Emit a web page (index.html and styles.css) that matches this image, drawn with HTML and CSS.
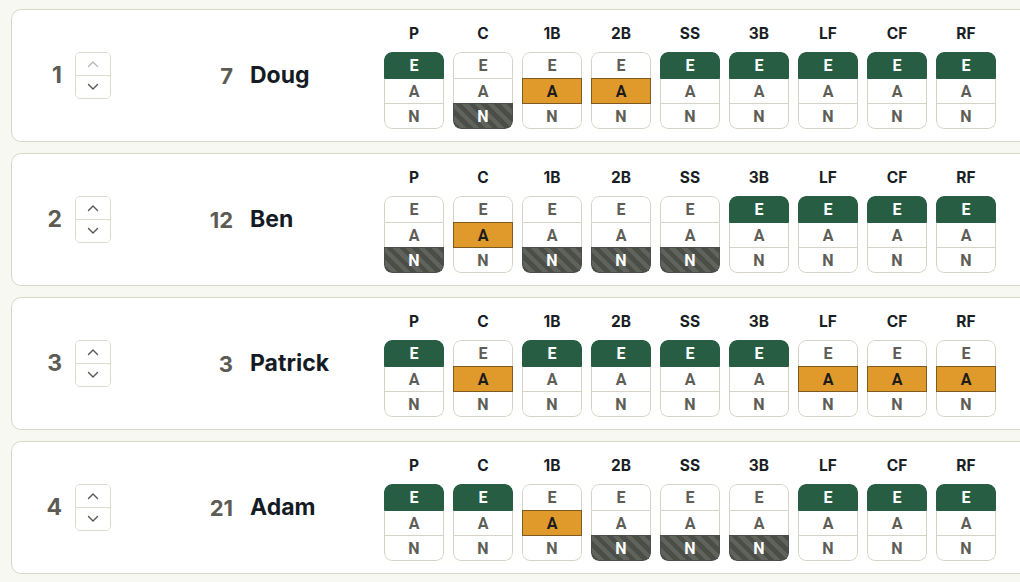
FILE: index.html
```html
<!DOCTYPE html>
<html lang="en">
<head>
<meta charset="utf-8">
<title>Lineup</title>
<link rel="stylesheet" href="styles.css">
</head>
<body>
<div class="list">

  <div class="card">
    <div class="rank">1</div>
    <div class="stepper">
      <button class="step disabled"><svg viewBox="0 0 12 8" width="12" height="8"><path d="M1.5 6.5 6 2l4.5 4.5"/></svg></button>
      <button class="step"><svg viewBox="0 0 12 8" width="12" height="8"><path d="M1.5 1.5 6 6l4.5-4.5"/></svg></button>
    </div>
    <div class="jersey">7</div>
    <div class="name">Doug</div>
    <div class="positions">
      <div class="pos"><div class="lbl">P</div><div class="cell"><div class="opt e on">E</div><div class="opt a">A</div><div class="opt n">N</div></div></div>
      <div class="pos"><div class="lbl">C</div><div class="cell"><div class="opt e">E</div><div class="opt a">A</div><div class="opt n on">N</div></div></div>
      <div class="pos"><div class="lbl">1B</div><div class="cell"><div class="opt e">E</div><div class="opt a on">A</div><div class="opt n">N</div></div></div>
      <div class="pos"><div class="lbl">2B</div><div class="cell"><div class="opt e">E</div><div class="opt a on">A</div><div class="opt n">N</div></div></div>
      <div class="pos"><div class="lbl">SS</div><div class="cell"><div class="opt e on">E</div><div class="opt a">A</div><div class="opt n">N</div></div></div>
      <div class="pos"><div class="lbl">3B</div><div class="cell"><div class="opt e on">E</div><div class="opt a">A</div><div class="opt n">N</div></div></div>
      <div class="pos"><div class="lbl">LF</div><div class="cell"><div class="opt e on">E</div><div class="opt a">A</div><div class="opt n">N</div></div></div>
      <div class="pos"><div class="lbl">CF</div><div class="cell"><div class="opt e on">E</div><div class="opt a">A</div><div class="opt n">N</div></div></div>
      <div class="pos"><div class="lbl">RF</div><div class="cell"><div class="opt e on">E</div><div class="opt a">A</div><div class="opt n">N</div></div></div>
    </div>
  </div>

  <div class="card">
    <div class="rank">2</div>
    <div class="stepper">
      <button class="step"><svg viewBox="0 0 12 8" width="12" height="8"><path d="M1.5 6.5 6 2l4.5 4.5"/></svg></button>
      <button class="step"><svg viewBox="0 0 12 8" width="12" height="8"><path d="M1.5 1.5 6 6l4.5-4.5"/></svg></button>
    </div>
    <div class="jersey">12</div>
    <div class="name">Ben</div>
    <div class="positions">
      <div class="pos"><div class="lbl">P</div><div class="cell"><div class="opt e">E</div><div class="opt a">A</div><div class="opt n on">N</div></div></div>
      <div class="pos"><div class="lbl">C</div><div class="cell"><div class="opt e">E</div><div class="opt a on">A</div><div class="opt n">N</div></div></div>
      <div class="pos"><div class="lbl">1B</div><div class="cell"><div class="opt e">E</div><div class="opt a">A</div><div class="opt n on">N</div></div></div>
      <div class="pos"><div class="lbl">2B</div><div class="cell"><div class="opt e">E</div><div class="opt a">A</div><div class="opt n on">N</div></div></div>
      <div class="pos"><div class="lbl">SS</div><div class="cell"><div class="opt e">E</div><div class="opt a">A</div><div class="opt n on">N</div></div></div>
      <div class="pos"><div class="lbl">3B</div><div class="cell"><div class="opt e on">E</div><div class="opt a">A</div><div class="opt n">N</div></div></div>
      <div class="pos"><div class="lbl">LF</div><div class="cell"><div class="opt e on">E</div><div class="opt a">A</div><div class="opt n">N</div></div></div>
      <div class="pos"><div class="lbl">CF</div><div class="cell"><div class="opt e on">E</div><div class="opt a">A</div><div class="opt n">N</div></div></div>
      <div class="pos"><div class="lbl">RF</div><div class="cell"><div class="opt e on">E</div><div class="opt a">A</div><div class="opt n">N</div></div></div>
    </div>
  </div>

  <div class="card">
    <div class="rank">3</div>
    <div class="stepper">
      <button class="step"><svg viewBox="0 0 12 8" width="12" height="8"><path d="M1.5 6.5 6 2l4.5 4.5"/></svg></button>
      <button class="step"><svg viewBox="0 0 12 8" width="12" height="8"><path d="M1.5 1.5 6 6l4.5-4.5"/></svg></button>
    </div>
    <div class="jersey">3</div>
    <div class="name">Patrick</div>
    <div class="positions">
      <div class="pos"><div class="lbl">P</div><div class="cell"><div class="opt e on">E</div><div class="opt a">A</div><div class="opt n">N</div></div></div>
      <div class="pos"><div class="lbl">C</div><div class="cell"><div class="opt e">E</div><div class="opt a on">A</div><div class="opt n">N</div></div></div>
      <div class="pos"><div class="lbl">1B</div><div class="cell"><div class="opt e on">E</div><div class="opt a">A</div><div class="opt n">N</div></div></div>
      <div class="pos"><div class="lbl">2B</div><div class="cell"><div class="opt e on">E</div><div class="opt a">A</div><div class="opt n">N</div></div></div>
      <div class="pos"><div class="lbl">SS</div><div class="cell"><div class="opt e on">E</div><div class="opt a">A</div><div class="opt n">N</div></div></div>
      <div class="pos"><div class="lbl">3B</div><div class="cell"><div class="opt e on">E</div><div class="opt a">A</div><div class="opt n">N</div></div></div>
      <div class="pos"><div class="lbl">LF</div><div class="cell"><div class="opt e">E</div><div class="opt a on">A</div><div class="opt n">N</div></div></div>
      <div class="pos"><div class="lbl">CF</div><div class="cell"><div class="opt e">E</div><div class="opt a on">A</div><div class="opt n">N</div></div></div>
      <div class="pos"><div class="lbl">RF</div><div class="cell"><div class="opt e">E</div><div class="opt a on">A</div><div class="opt n">N</div></div></div>
    </div>
  </div>

  <div class="card">
    <div class="rank">4</div>
    <div class="stepper">
      <button class="step"><svg viewBox="0 0 12 8" width="12" height="8"><path d="M1.5 6.5 6 2l4.5 4.5"/></svg></button>
      <button class="step"><svg viewBox="0 0 12 8" width="12" height="8"><path d="M1.5 1.5 6 6l4.5-4.5"/></svg></button>
    </div>
    <div class="jersey">21</div>
    <div class="name">Adam</div>
    <div class="positions">
      <div class="pos"><div class="lbl">P</div><div class="cell"><div class="opt e on">E</div><div class="opt a">A</div><div class="opt n">N</div></div></div>
      <div class="pos"><div class="lbl">C</div><div class="cell"><div class="opt e on">E</div><div class="opt a">A</div><div class="opt n">N</div></div></div>
      <div class="pos"><div class="lbl">1B</div><div class="cell"><div class="opt e">E</div><div class="opt a on">A</div><div class="opt n">N</div></div></div>
      <div class="pos"><div class="lbl">2B</div><div class="cell"><div class="opt e">E</div><div class="opt a">A</div><div class="opt n on">N</div></div></div>
      <div class="pos"><div class="lbl">SS</div><div class="cell"><div class="opt e">E</div><div class="opt a">A</div><div class="opt n on">N</div></div></div>
      <div class="pos"><div class="lbl">3B</div><div class="cell"><div class="opt e">E</div><div class="opt a">A</div><div class="opt n on">N</div></div></div>
      <div class="pos"><div class="lbl">LF</div><div class="cell"><div class="opt e on">E</div><div class="opt a">A</div><div class="opt n">N</div></div></div>
      <div class="pos"><div class="lbl">CF</div><div class="cell"><div class="opt e on">E</div><div class="opt a">A</div><div class="opt n">N</div></div></div>
      <div class="pos"><div class="lbl">RF</div><div class="cell"><div class="opt e on">E</div><div class="opt a">A</div><div class="opt n">N</div></div></div>
    </div>
  </div>

</div>
</body>
</html>
```

FILE: styles.css
```css
* { box-sizing: border-box; }

html, body {
  margin: 0;
  background: #f8f8f2;
  overflow: hidden;
}

body {
  font-family: Inter, "Noto Sans", sans-serif;
  padding: 9px 0 0 11px;
}

.list {
  display: flex;
  flex-direction: column;
  gap: 11px;
  width: 1040px;
}

.card {
  display: flex;
  align-items: center;
  height: 133px;
  background: #ffffff;
  border: 1px solid #d9d6c9;
  border-radius: 10px;
}

.rank {
  width: 50px;
  text-align: right;
  font-size: 23px;
  font-weight: 700;
  color: #5c5c55;
  line-height: 1;
}

.stepper {
  margin-left: 13px;
  width: 36px;
  height: 47px;
  border: 1px solid #dcd9cd;
  border-radius: 5px;
  display: flex;
  flex-direction: column;
  overflow: hidden;
}

.step {
  flex: 1;
  margin: 0;
  padding: 0;
  border: 0;
  background: #ffffff;
  display: flex;
  align-items: center;
  justify-content: center;
}

.step + .step {
  border-top: 1px solid #dcd9cd;
}

.step svg path {
  fill: none;
  stroke: #55554f;
  stroke-width: 1.4;
  stroke-linecap: round;
  stroke-linejoin: round;
}

.step.disabled svg path {
  stroke: #b8b8b2;
}

.jersey {
  width: 122px;
  text-align: right;
  font-size: 22px;
  font-weight: 700;
  color: #5c5c55;
  line-height: 1;
}

.name {
  margin-left: 17px;
  width: 134px;
  font-size: 23px;
  font-weight: 700;
  color: #151b24;
  line-height: 1;
}

.positions {
  display: flex;
  gap: 9px;
  align-self: flex-start;
  padding-top: 14px;
}

.pos {
  width: 60px;
  display: flex;
  flex-direction: column;
}

.lbl {
  height: 20px;
  line-height: 20px;
  text-align: center;
  font-size: 15.5px;
  font-weight: 700;
  color: #1a1f26;
  margin-bottom: 8px;
}

.cell {
  display: flex;
  flex-direction: column;
  border-radius: 8px;
  overflow: hidden;
}

.opt {
  height: 25px;
  display: flex;
  align-items: center;
  justify-content: center;
  font-family: Roboto, "Noto Sans", sans-serif;
  font-size: 16px;
  font-weight: 700;
  color: #5e5e57;
  background: #ffffff;
  border: 1px solid #d6d3c6;
  border-top: 0;
  position: relative;
}

.opt.e {
  height: 27px;
  border-top: 1px solid #d6d3c6;
  border-radius: 8px 8px 0 0;
}

.opt.n {
  border-radius: 0 0 8px 8px;
}

.opt.e.on {
  background: #275e43;
  border-color: #275e43;
  color: #ffffff;
}

.opt.a.on {
  background: #e09a2c;
  border-color: #7d5a1f;
  box-shadow: 0 -1px 0 #7d5a1f;
  color: #1b1b1b;
}

.opt.n.on {
  background: repeating-linear-gradient(45deg, #4a4d48 0 4.5px, #60635c 4.5px 9px);
  border-color: #4a4d48;
  box-shadow: 0 -1px 0 #4a4d48;
  color: #ffffff;
}
```
